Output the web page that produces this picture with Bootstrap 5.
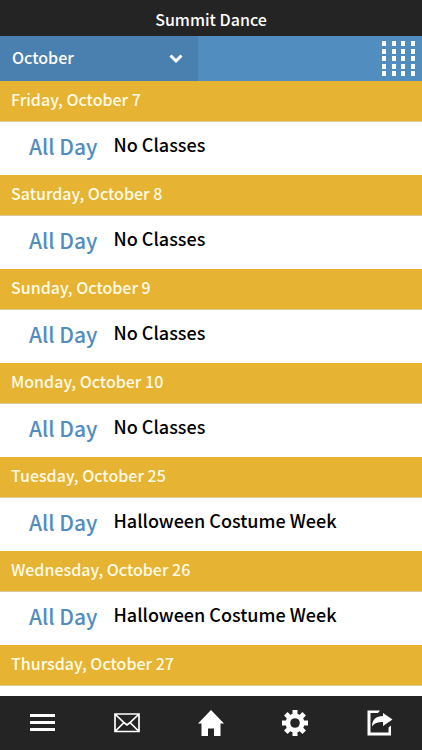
<!DOCTYPE html>
<html lang="en">
<head>
<meta charset="utf-8">
<meta name="viewport" content="width=device-width, initial-scale=1">
<title>Summit Dance</title>
<link href="https://cdn.jsdelivr.net/npm/bootstrap@5.3.0/dist/css/bootstrap.min.css" rel="stylesheet">
<style>
  body { font-family: "Noto Sans CJK SC", "Noto Sans", sans-serif; font-weight: 500; color: #000; }
  .bar-dark { background: #242424; color: #fff; }
  .app-title { font-size: 16px; line-height: 24px; padding: 7px 0 5px; font-weight: 500; }
  .month-bar { background: #528dbf; min-height: 45px; }
  .month-picker { width: 47%; background: #4a80b0; }
  .month-select { appearance: none; background: transparent; border: 0; color: #fff; font-size: 16px; line-height: 24px; font-weight: 500; padding: 8px 12px 12px; }
  .month-picker svg { position: absolute; right: 15px; top: 18px; pointer-events: none; }
  .event-list { scrollbar-width: none; }
  .event-list::-webkit-scrollbar { display: none; }
  .day-title { background: #e6b333; color: #fffbe6; font-size: 16px; line-height: 24px; font-weight: 500; padding: 6px 11px 10px; border-bottom: 1px solid #d8c99b; }
  .event-row { min-height: 53px; padding: 10px 12px 0 29px; gap: 16px; }
  .event-time { color: #528dbf; font-size: 21px; line-height: 28px; }
  .event-name { font-size: 18px; line-height: 24px; }
  .tab-bar { min-height: 54px; padding-bottom: 1px; }
</style>
</head>
<body class="bg-white">
<div class="d-flex flex-column vh-100">
  <header>
    <h1 class="app-title bar-dark text-center m-0">Summit Dance</h1>
    <div class="month-bar d-flex justify-content-between">
      <div class="month-picker position-relative d-flex">
        <select class="month-select w-100" aria-label="Month">
          <option>September</option><option selected>October</option><option>November</option>
        </select>
        <svg width="14" height="10" viewBox="0 0 14 10" fill="none" stroke="#fff" stroke-width="3" aria-hidden="true"><path d="M1.500 1.500 7 7l5.500-5.500"/></svg>
      </div>
      <button type="button" class="btn p-0 border-0 rounded-0 pe-1" aria-label="Calendar view">
        <svg class="d-block" width="38" height="38" viewBox="0 0 38 38" fill="#fff" shape-rendering="crispEdges" aria-hidden="true">
          <defs><path id="dots" d="M2 0h4v5h-4zM12 0h4v5h-4zM21 0h4v5h-4zM31 0h4v5h-4z"/></defs>
          <use href="#dots" y="1"/><use href="#dots" y="9"/><use href="#dots" y="16"/><use href="#dots" y="24"/><use href="#dots" y="31"/>
        </svg>
      </button>
    </div>
  </header>
  <main class="event-list flex-fill overflow-auto">
    <section><h2 class="day-title m-0">Friday, October 7</h2><div class="event-row d-flex"><span class="event-time">All Day</span><span class="event-name">No Classes</span></div></section>
    <section><h2 class="day-title m-0">Saturday, October 8</h2><div class="event-row d-flex"><span class="event-time">All Day</span><span class="event-name">No Classes</span></div></section>
    <section><h2 class="day-title m-0">Sunday, October 9</h2><div class="event-row d-flex"><span class="event-time">All Day</span><span class="event-name">No Classes</span></div></section>
    <section><h2 class="day-title m-0">Monday, October 10</h2><div class="event-row d-flex"><span class="event-time">All Day</span><span class="event-name">No Classes</span></div></section>
    <section><h2 class="day-title m-0">Tuesday, October 25</h2><div class="event-row d-flex"><span class="event-time">All Day</span><span class="event-name">Halloween Costume Week</span></div></section>
    <section><h2 class="day-title m-0">Wednesday, October 26</h2><div class="event-row d-flex"><span class="event-time">All Day</span><span class="event-name">Halloween Costume Week</span></div></section>
    <section><h2 class="day-title m-0">Thursday, October 27</h2></section>
  </main>
  <nav class="tab-bar bar-dark d-flex" aria-label="Main">
    <a href="#" class="flex-fill d-flex align-items-center justify-content-center" aria-label="Menu"><svg width="28" height="28" viewBox="0 0 28 28" fill="#fff"><path d="M2 5h25v3H2zM2 12h25v3H2zM2 19h25v3H2z"/></svg></a>
    <a href="#" class="flex-fill d-flex align-items-center justify-content-center" aria-label="Messages"><svg width="28" height="28" viewBox="0 0 28 28" fill="none" stroke="#fff" stroke-width="1.700"><path d="M2 5h24v17.500H2zM2.500 5.500l9 8.500 2.500 2 2.500-2 9-8.500M2.500 22l8.500-8.500M25.500 22 17 13.500"/></svg></a>
    <a href="#" class="flex-fill d-flex align-items-center justify-content-center" aria-label="Home"><svg width="28" height="28" viewBox="0 0 28 28" fill="#fff"><path d="M14 1 1 14.500h3.500V27h6.500v-7.500h6V27h6.500V14.500H27z"/></svg></a>
    <a href="#" class="flex-fill d-flex align-items-center justify-content-center" aria-label="Settings"><svg width="28" height="28" viewBox="0 0 28 28"><g fill="#fff"><circle cx="14" cy="14" r="9.500"/><g id="teeth"><path id="tooth" d="M11.500 1h5v26h-5z"/><use href="#tooth" transform="rotate(90 14 14)"/></g><use href="#teeth" transform="rotate(45 14 14)"/></g><circle cx="14" cy="14" r="4.800" fill="#242424"/></svg></a>
    <a href="#" class="flex-fill d-flex align-items-center justify-content-center" aria-label="Share"><svg width="28" height="28" viewBox="0 0 28 28" fill="#fff"><path d="M1.500 1.500h12.500l-2 2.500H4.500v19.500h18v-5l2.500-2v10H1.500z"/><path d="M17 4l9.500 6.500L17 17v-4c-5 0-8.500 1-11 4.500 0-6.500 4-10.500 11-10.500z"/></svg></a>
  </nav>
</div>
<script src="https://cdn.jsdelivr.net/npm/bootstrap@5.3.0/dist/js/bootstrap.bundle.min.js"></script>
</body>
</html>
